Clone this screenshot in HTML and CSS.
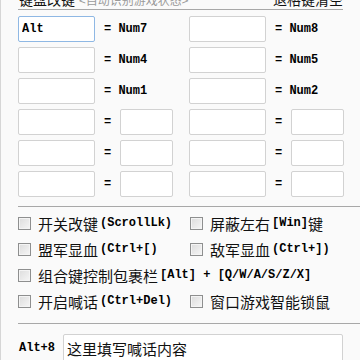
FILE: index.html
```html
<!DOCTYPE html>
<html lang="zh-CN">
<head>
    <meta charset="UTF-8">
    <title>键盘改键</title>
    <link rel="stylesheet" href="styles.css">
</head>
<body>
    <div class="window">
        <div class="edge"></div>
        <div class="panel">
            <div class="head">
                <span class="title">键盘改键</span>
                <span class="hint">&lt;自动识别游戏状态&gt;</span>
                <span class="clear">退格键清空</span>
            </div>

            <div class="keys">
                <div class="key-row">
                    <div class="pair"><input class="key focus" value="Alt"><span class="eq">= Num7</span></div>
                    <div class="pair"><input class="key"><span class="eq">= Num8</span></div>
                </div>
                <div class="key-row">
                    <div class="pair"><input class="key"><span class="eq">= Num4</span></div>
                    <div class="pair"><input class="key"><span class="eq">= Num5</span></div>
                </div>
                <div class="key-row">
                    <div class="pair"><input class="key"><span class="eq">= Num1</span></div>
                    <div class="pair"><input class="key"><span class="eq">= Num2</span></div>
                </div>
                <div class="key-row">
                    <div class="pair"><input class="key"><span class="eq">=</span><input class="key small"></div>
                    <div class="pair"><input class="key"><span class="eq">=</span><input class="key small"></div>
                </div>
                <div class="key-row">
                    <div class="pair"><input class="key"><span class="eq">=</span><input class="key small"></div>
                    <div class="pair"><input class="key"><span class="eq">=</span><input class="key small"></div>
                </div>
                <div class="key-row">
                    <div class="pair"><input class="key"><span class="eq">=</span><input class="key small"></div>
                    <div class="pair"><input class="key"><span class="eq">=</span><input class="key small"></div>
                </div>
            </div>

            <div class="opts">
                <label class="opt"><span class="box"></span>开关改键 <span class="mono">(ScrollLk)</span></label>
                <label class="opt"><span class="box"></span>屏蔽左右<span class="mono">[Win]</span>键</label>
                <label class="opt"><span class="box"></span>盟军显血 <span class="mono">(Ctrl+[)</span></label>
                <label class="opt"><span class="box"></span>敌军显血<span class="mono">(Ctrl+])</span></label>
                <label class="opt wide"><span class="box"></span>组合键控制包裹栏 <span class="mono">[Alt] + [Q/W/A/S/Z/X]</span></label>
                <label class="opt"><span class="box"></span>开启喊话<span class="mono">(Ctrl+Del)</span></label>
                <label class="opt"><span class="box"></span>窗口游戏智能锁鼠</label>
            </div>

            <div class="shout">
                <span class="mono">Alt+8</span>
                <input class="say" value="这里填写喊话内容">
            </div>
        </div>
    </div>
</body>
</html>
```

FILE: styles.css
```css
body {
    margin: 0;
    background: #fafafa;
    font-family: "Noto Sans CJK SC", sans-serif;
    color: #111;
    overflow: hidden;
}

.window {
    display: flex;
    height: 360px;
}

.edge {
    width: 3px;
    background: #9c9c9c;
    border-right: 1px solid #d6d6d6;
}

.panel {
    flex: 1;
    padding: 0 13px 0 17px;
}

.mono {
    font-family: "Liberation Mono", monospace;
    font-size: 12px;
    font-weight: bold;
    color: #000;
}

/* header, mostly scrolled out of view */
.head {
    display: flex;
    align-items: baseline;
    margin-top: -9px;
    height: 18px;
    line-height: 17px;
    border-bottom: 1px solid #a8a8a8;
    font-size: 14px;
    width: 325px;
}

.title {
    margin-left: 1px;
}

.hint {
    font-size: 12px;
    color: #9a9a9a;
    margin-left: 4px;
}

.clear {
    margin-left: auto;
}

/* key mapping grid */
.keys {
    display: flex;
    flex-direction: column;
    gap: 5px;
    padding-top: 6px;
    padding-bottom: 9px;
    border-bottom: 1px solid #a8a8a8;
}

.key-row {
    display: flex;
    height: 26px;
}

.pair {
    display: flex;
    align-items: center;
    width: 171px;
}

.key {
    box-sizing: border-box;
    width: 77px;
    height: 26px;
    margin: 0;
    padding: 0 3px;
    border: 1px solid #d2d2d2;
    border-radius: 2px;
    background: #fff;
    font-family: "Liberation Mono", monospace;
    font-size: 12px;
    font-weight: bold;
    color: #000;
    outline: none;
}

.key.focus {
    border-color: #8fb8e4;
}

.key.small {
    width: 53px;
    margin-left: 9px;
}

.eq {
    margin-left: 9px;
    font-family: "Liberation Mono", monospace;
    font-size: 12px;
    font-weight: bold;
    color: #000;
}

/* options */
.opts {
    display: grid;
    grid-template-columns: 172px auto;
    grid-auto-rows: 26px;
    padding-top: 3px;
    padding-bottom: 9px;
    border-bottom: 1px solid #a8a8a8;
}

.opt {
    display: flex;
    align-items: center;
    font-size: 15px;
    white-space: nowrap;
}

.opt .mono {
    margin-left: 2px;
}

.opt.wide {
    grid-column: 1 / 3;
}

.box {
    box-sizing: border-box;
    width: 13px;
    height: 13px;
    margin-right: 7px;
    border: 1px solid #8e8f8f;
    background: linear-gradient(135deg, #dcdcdc, #f6f6f6);
    box-shadow: inset 0 0 0 1px #f4f4f4;
}

/* shout line */
.shout {
    display: flex;
    align-items: center;
    gap: 8px;
    margin-top: 10px;
    padding-left: 1px;
}

.say {
    box-sizing: border-box;
    width: 280px;
    height: 28px;
    padding: 0 3px;
    border: 1px solid #d2d2d2;
    border-radius: 2px;
    background: #fff;
    font-family: "Noto Sans CJK SC", sans-serif;
    font-size: 15px;
    color: #111;
    outline: none;
}
```
